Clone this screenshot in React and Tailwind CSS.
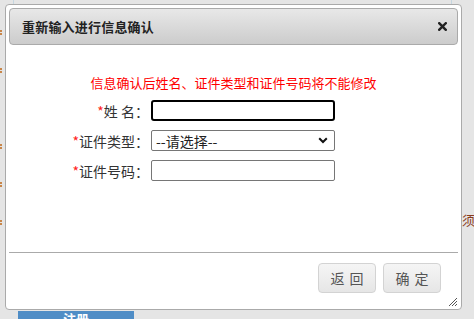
import React from "react";

const font = { fontFamily: '"Noto Sans CJK SC", "Liberation Sans", sans-serif' };

function Dot() {
  return <div className="w-[2px] h-[5px] flex flex-col justify-between"><div className="h-[2px] bg-[#c8864a]" /><div className="h-[2px] bg-[#c8864a]" /></div>;
}

export default function App() {
  return (
    <div className="relative w-[474px] h-[319px] overflow-hidden bg-[#e5e5e5] text-[13px]" style={font}>
      {/* background page */}
      <div className="flex h-full">
        <div className="flex flex-col pt-[30px] gap-[33px] w-[2px]">
          <Dot /><Dot /><div className="h-[5px]" /><Dot /><Dot /><Dot />
        </div>
        <div className="flex-1 flex flex-col">
          <div className="flex h-[4px]">
            <div className="ml-[11px] w-px bg-[#c5d6e0]" />
            <div className="ml-[437px] w-px bg-[#c5d6e0]" />
          </div>
          <div className="flex-1 flex justify-end">
            <div className="mt-[207px] w-[12px] overflow-hidden text-[#8a3b1c] leading-[18px]">须</div>
          </div>
          <div className="ml-[16px] w-[116px] h-[8px] bg-[#4f8dc6] overflow-hidden flex justify-center">
            <span className="text-white font-bold mt-[-1px] leading-[18px]">注册</span>
          </div>
        </div>
      </div>

      {/* dialog */}
      <div className="absolute left-[5px] top-[4px] w-[457px] h-[306px] bg-white border border-[#aaaaaa] rounded-[4px] p-[3px] flex flex-col">
        <div className="h-[37px] border border-[#aaaaaa] rounded-[4px] bg-gradient-to-b from-[#e8e8e8] to-[#cccccc] flex items-center justify-between pl-[12px] pr-[10px]">
          <span className="font-bold text-[#222] text-[13px] tracking-[0.2px]">重新输入进行信息确认</span>
          <svg width="9" height="9" viewBox="0 0 9 9">
            <path d="M1.2 1.2 L7.8 7.8 M7.8 1.2 L1.2 7.8" stroke="#222" strokeWidth="2.4" strokeLinecap="square" />
          </svg>
        </div>

        <div className="flex-1 flex flex-col">
          <div className="mt-[29px] text-center text-[#ff0000] leading-[18px]">信息确认后姓名、证件类型和证件号码将不能修改</div>
          <div className="mt-[8px] flex flex-col gap-[9px] text-[14px]">
            <div className="flex items-center h-[21px]">
              <label className="w-[140px] text-right text-[#333] leading-[18px]"><span className="text-[#ff2020]">*</span>姓 名：</label>
              <input className="ml-[2px] w-[184px] h-[21px] border-2 border-black rounded-[3px] outline-none px-1" />
            </div>
            <div className="flex items-center h-[21px]">
              <label className="w-[140px] text-right text-[#333] leading-[18px]"><span className="text-[#ff2020]">*</span>证件类型：</label>
              <div className="relative ml-[2px] w-[184px] h-[21px]">
                <select className="appearance-none w-full h-full border border-[#767676] rounded-[2px] bg-white pl-[4px] text-[14px] text-[#222] leading-[18px] outline-none">
                  <option>--请选择--</option>
                </select>
                <svg className="absolute right-[7px] top-[7px] pointer-events-none" width="10" height="7" viewBox="0 0 10 7">
                  <path d="M1.2 1.2 L5 5 L8.8 1.2" stroke="#111" strokeWidth="2" fill="none" />
                </svg>
              </div>
            </div>
            <div className="flex items-center h-[21px]">
              <label className="w-[140px] text-right text-[#333] leading-[18px]"><span className="text-[#ff2020]">*</span>证件号码：</label>
              <input className="ml-[2px] w-[184px] h-[21px] border border-[#767676] rounded-[2px] outline-none px-1" />
            </div>
          </div>
        </div>

        <div className="border-t border-[#aaaaaa] h-[54px] flex justify-end items-start pt-[10px] pr-[17px] gap-[7px]">
          <button className="w-[58px] h-[30px] border border-[#d3d3d3] rounded-[4px] bg-gradient-to-b from-[#f5f5f5] to-[#e6e6e6] text-[#555] text-[14px] tracking-[5px] pl-[5px]">返回</button>
          <button className="w-[58px] h-[30px] border border-[#d3d3d3] rounded-[4px] bg-gradient-to-b from-[#f5f5f5] to-[#e6e6e6] text-[#555] text-[14px] tracking-[5px] pl-[5px]">确定</button>
        </div>

        <svg className="absolute right-[3px] bottom-[2px]" width="10" height="10" viewBox="0 0 10 10">
          <path d="M9 1 L1 9 M9 4 L4 9 M9 7 L7 9" stroke="#555" strokeWidth="1" />
        </svg>
      </div>
    </div>
  );
}
